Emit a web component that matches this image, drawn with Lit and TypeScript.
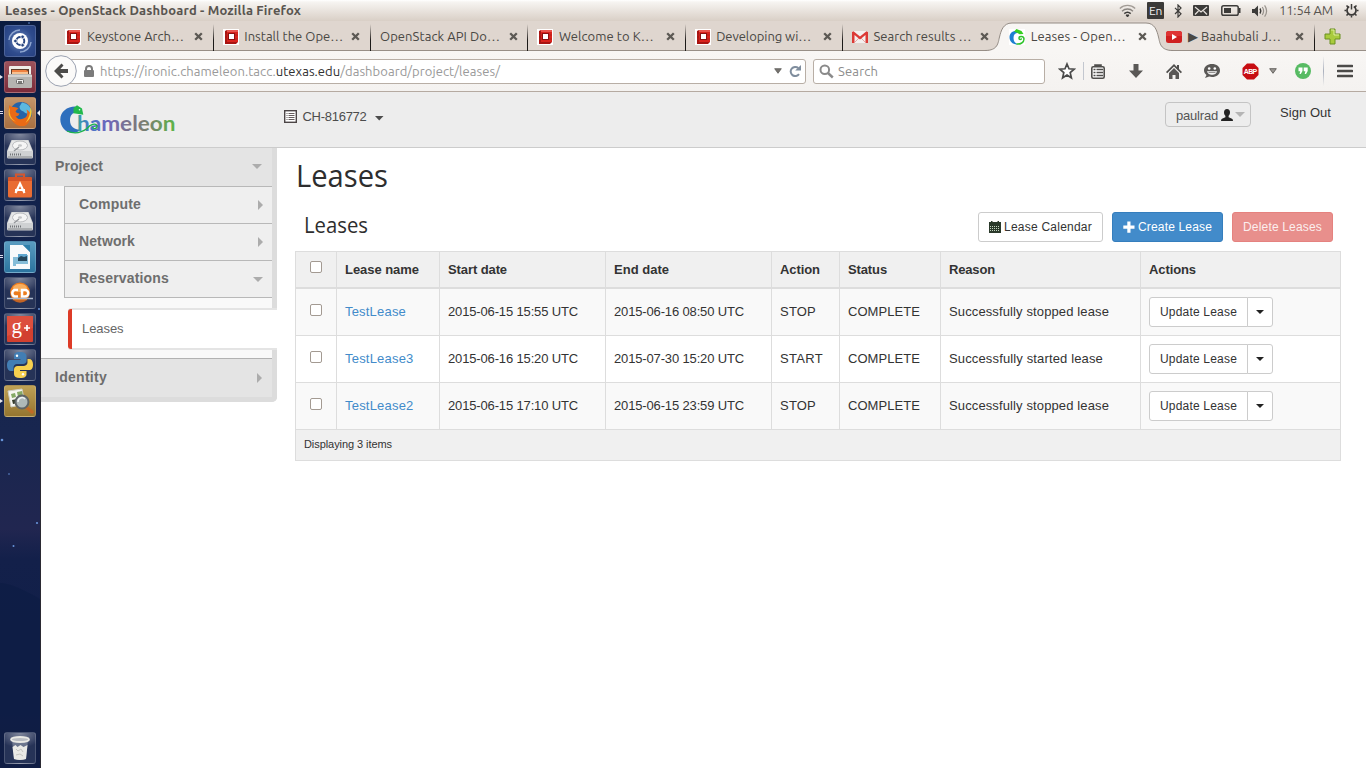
import { LitElement, html, css } from 'lit';
import { customElement, property } from 'lit/decorators.js';

/** Single line of text set to an exact measure by tracking, or by condensing. */
@customElement('ui-text')
class UiText extends LitElement {
  @property({ type: Number }) w = 0;
  @property({ type: Boolean }) condense = false;
  static styles = css`
    :host { display: inline-block; white-space: pre; flex: none; }
    span { display: inline-block; transform-origin: 0 50%; white-space: pre; }
  `;
  render() { return html`<span><slot></slot></span>`; }
  firstUpdated() {
    const span = this.renderRoot.querySelector('span') as HTMLElement;
    const natural = span.getBoundingClientRect().width;
    const count = (this.textContent || '').length;
    if (!this.w || !natural || !count) return;
    this.style.width = this.w + 'px';
    if (this.condense) span.style.transform = `scaleX(${this.w / natural})`;
    else span.style.letterSpacing = (this.w - natural) / count + 'px';
  }
}

const openstack = html`<svg width="16" height="16" viewBox="0 0 16 16"><rect width="16" height="16" fill="#fff"/><path d="M2 2l2-1h11v12l-2 2H2z" fill="#a81411"/><path d="M4 1h11v12H4z" fill="#d9221c"/><path d="M4 1h11v2H4z" fill="#e8564f"/><rect x="5" y="4" width="7" height="7" fill="#8d1010"/><rect x="6" y="5" width="5" height="5" fill="#fff"/><path d="M2 6h3M2 10h3M12 6h3M12 10h3" stroke="#b0221d" stroke-width="1"/></svg>`;
const gmail = html`<svg width="16" height="16" viewBox="0 0 16 16"><rect y="2" width="16" height="12" rx="1" fill="#f3f0ef"/><path d="M3 13l4-4M13 13L9 9" stroke="#e5a5a2" fill="none"/><path d="M0 3v11h2.500V6L8 10.500 13.500 6v8H16V3l-1.500-.8L8 7.600 1.500 2.200z" fill="#dc3a36"/></svg>`;
const chameleon = html`<svg width="16" height="16" viewBox="0 0 16 16"><rect width="16" height="16" fill="#fff"/><path d="M8.500 2.200C4 1 .5 4 .5 8.300S4 16 9 15.300c-3-1-4.500-3-4.500-6.300S6 4 9 4z" fill="#1d7fd0"/><path d="M5 2.500L7.500 0l5 2 2 3-4 .3L8.500 4z" fill="#35cf1e"/><path d="M7.500 15c4 .5 7.500-1.500 7.500-5 0-3-5-3.500-5-.8 0 1.800 2.600 1.600 2.300.2" fill="none" stroke="#30c32b" stroke-width="1.500"/></svg>`;
const youtube = html`<svg width="16" height="16" viewBox="0 0 16 16"><rect y="2" width="16" height="12" rx="2.500" fill="#cf2020"/><path d="M0 4.500Q0 2 2.500 2h11Q16 2 16 4.500V7H0z" fill="#df3434"/><path d="M6 5l5 3-5 3z" fill="#fff"/></svg>`;
const closeX = html`<svg class="x" width="9" height="9" viewBox="0 0 9 9"><path d="M1.200 1.200l6.600 6.600M7.800 1.200L1.200 7.800" stroke="#5c5954" stroke-width="2.300"/></svg>`;

const tabs = [
  { icon: openstack, text: 'Keystone Arch…', w: 97 },
  { icon: openstack, text: 'Install the Ope…', w: 99 },
  { icon: null, text: 'OpenStack API Do…', w: 120 },
  { icon: openstack, text: 'Welcome to K…', w: 95 },
  { icon: openstack, text: 'Developing wi…', w: 95 },
  { icon: gmail, text: 'Search results …', w: 98 },
  { icon: chameleon, text: 'Leases - Open…', w: 95, active: true },
  { icon: youtube, text: '▶ Baahubali J…', w: 93 },
];

@customElement('browser-tabs')
class BrowserTabs extends LitElement {
  static styles = css`
    :host { display: flex; height: 30px; background: #dfd6cf; box-sizing: border-box; padding-left: 15px; border-bottom: 1px solid #988f87;
      font: 13px/16px "Ubuntu", "Noto Sans", sans-serif; color: #4a4844; }
    .tab { width: 157.3px; flex: none; box-sizing: border-box; display: flex; align-items: center; padding: 2px 10.4px 0 9.4px; height: 29px; position: relative; }
    .tab > svg { flex: none; }
    .tab ui-text { margin: -1px 0 0 5.6px; }
    .tab ui-text.bare { margin-left: 0; }
    .x { margin-left: auto; }
    .tab::after { content: ""; position: absolute; right: -0.600px; top: 3px; width: 1px; height: 27px; background: linear-gradient(#dfd6cf00, #1c1a18 60%); }
    .tab.active::after, .tab.before::after { display: none; }
    .shape { position: absolute; left: -15px; top: 0; }
    .active > *:not(.shape) { position: relative; }
    .plus { margin: 7px 0 0 10px; }
  `;
  render() {
    return html`${tabs.map((t, i) => html`<div class="tab ${t.active ? 'active' : ''} ${tabs[i + 1]?.active ? 'before' : ''}">
      ${t.active ? html`<svg class="shape" width="188" height="30" viewBox="0 0 188 30"><path d="M0 29.500C13 29.500 13 22 14.500 16S18 2 27 2H161c9 0 11 8 12.500 14S175 29.500 188 29.500V31H0z" fill="#f8f6f4"/><path d="M0 29.500C13 29.500 13 22 14.500 16S18 2 27 2H161c9 0 11 8 12.500 14S175 29.500 188 29.500" fill="none" stroke="#938b84"/></svg>` : ''}
      ${t.icon ?? ''}<ui-text class=${t.icon ? '' : 'bare'} .w=${t.w}>${t.text}</ui-text>${closeX}</div>`)}
      <svg class="plus" width="17" height="17" viewBox="0 0 17 17"><path d="M6 1h5v5h5v5h-5v5H6v-5H1V6h5z" fill="#a9cb3d" stroke="#6b9023"/><path d="M7 2h3v5h5" fill="none" stroke="#dcec9a"/></svg>`;
  }
}

@customElement('nav-bar')
class NavBar extends LitElement {
  static styles = css`
    :host { display: grid; grid-template-columns: 765px 7px 232px 6px 32px 1px 28px 48px 28px 48px 28px 18px 41px 1px 42px; align-items: center; justify-items: center;
      height: 41px; box-sizing: border-box; background: linear-gradient(#f8f6f4, #f4f2f0); border-bottom: 1px solid #b5aaa1; font: 13px/18px "Ubuntu", "Noto Sans", sans-serif; color: #999; }
    .loc { display: flex; width: 765px; align-items: center; position: relative; }
    .back { flex: none; margin-left: 4px; position: relative; z-index: 1; }
    .url { box-sizing: border-box; width: 744px; height: 25px; margin-left: -15px; border: 1px solid #b8aea5; border-radius: 0 3px 3px 0; background: #fff; display: flex; align-items: center; padding: 0 4px 0 21px; }
    .url svg { flex: none; }
    .url ui-text { margin-left: 6px; }
    .dark { color: #2e2e2e; }
    .dd { margin-left: auto; margin-right: 7px; }
    .search { box-sizing: border-box; width: 232px; height: 25px; border: 1px solid #b8aea5; border-radius: 3px; background: #fff; display: flex; align-items: center; padding-left: 5px; }
    .search ui-text { margin-left: 4px; color: #8d8d8d; }
    .sep { width: 1px; height: 18px; background: #c3c7cf; }
    .tall { height: 30px; background: linear-gradient(#f7f5f300, #aab0bd, #f7f5f300); }
  `;
  render() {
    return html`
    <div class="loc">
      <svg class="back" width="32" height="32" viewBox="0 0 32 32"><circle cx="16" cy="16" r="15.300" fill="#fbfaf9" stroke="#9aa1b0"/><path d="M16.500 8.500l-7.500 7.500 7.500 7.500 2-2-3.200-3.500H23v-4h-7.700l3.200-3.500z" fill="#4c4b49"/></svg>
      <div class="url">
        <svg width="10" height="12" viewBox="0 0 10 12"><path d="M2 6V4a3 3 0 0 1 6 0v2" fill="none" stroke="#7b7b7b" stroke-width="2"/><rect y="5" width="10" height="7" rx="1" fill="#7b7b7b"/></svg>
        <ui-text .w=${400}>https://ironic.chameleon.tacc.<span class="dark">utexas.edu</span>/dashboard/project/leases/</ui-text>
        <svg class="dd" width="8" height="6" viewBox="0 0 8 6"><path d="M.7.700h6.600L4 5.300z" fill="#76736f" stroke="#5c5a57" stroke-width=".8"/></svg>
        <svg width="12" height="12" viewBox="0 0 12 12"><path d="M9.300 3A4.600 4.600 0 1 0 10 9.200" fill="none" stroke="#7f8d9d" stroke-width="2"/><path d="M12 0v5.600H6.200z" fill="#7f8d9d"/></svg>
      </div>
    </div><span></span>
    <div class="search"><svg width="15" height="15" viewBox="0 0 15 15"><circle cx="5.800" cy="5.800" r="4.300" fill="none" stroke="#8a8a8a" stroke-width="2"/><path d="M9 9l4.800 4.500" stroke="#8a8a8a" stroke-width="2.400"/></svg><ui-text .w=${40}>Search</ui-text></div>
    <span></span>
    <svg width="18" height="18" viewBox="0 0 18 18"><path d="M9 2l2 4.800 5.200.4-4 3.400 1.200 5.200L9 13l-4.400 2.800 1.200-5.200-4-3.400 5.200-.4z" fill="#fff" stroke="#4a4a4a" stroke-width="1.700"/></svg>
    <span class="sep"></span>
    <svg width="14" height="15" viewBox="0 0 14 15"><path d="M4 3V1h6v2" fill="#4f4e4c" stroke="#4f4e4c" stroke-width="1.600"/><rect x=".8" y="2.800" width="12.400" height="11.400" rx="1.500" fill="#fff" stroke="#4f4e4c" stroke-width="1.600"/><path d="M2.500 5.500h2M2.500 8.500h2M2.500 11.500h2M5.500 5.500H12M5.500 8.500H12M5.500 11.500H12" stroke="#4f4e4c" stroke-width="1.400"/></svg>
    <svg width="14" height="14" viewBox="0 0 14 14"><path d="M4.500 0h5v6.500H14L7 14 0 6.500h4.500z" fill="#5a5856"/></svg>
    <svg width="16" height="15" viewBox="0 0 16 15"><path d="M8 0l3 3V1h2v4l3 3-1.200 1.200L8 2.600 1.200 9.200 0 8z" fill="#4f4e4c"/><path d="M3 9l5-5 5 5v6h-3.500v-4h-3v4H3z" fill="#5a5856"/></svg>
    <svg width="16" height="16" viewBox="0 0 16 16"><path d="M8 1c4.500 0 8 2.600 8 6.500S12.500 14 8 14c-1 0-2-.1-2.800-.4L1 15l1.500-3C1 10.800 0 9.300 0 7.500 0 3.600 3.500 1 8 1z" fill="#5a5856"/><circle cx="5.200" cy="5.500" r="1.300" fill="#fff"/><circle cx="10.800" cy="5.500" r="1.300" fill="#fff"/><path d="M3 8.300h10c-.5 2.400-2.500 3.500-5 3.500s-4.500-1.100-5-3.500z" fill="#fff"/><path d="M4.500 9.600h7" stroke="#5a5856" stroke-width=".7"/></svg>
    <svg width="17" height="17" viewBox="0 0 17 17"><path d="M5 .5h7L16.500 5v7L12 16.500H5L.5 12V5z" fill="#c70d12"/><text x="1.800" y="11.200" textLength="13.400" lengthAdjust="spacing" font-family="Liberation Sans" font-size="7" font-weight="bold" fill="#fff">ABP</text></svg>
    <svg width="8" height="6" viewBox="0 0 8 6"><path d="M.7.700h6.600L4 5.300z" fill="#9a9793" stroke="#5c5a57" stroke-width=".9"/></svg>
    <svg width="16" height="16" viewBox="0 0 16 16"><circle cx="8" cy="8" r="8" fill="#57bb63"/><path d="M3.500 4.500h4v3.500L5.800 11H4.500L5.200 8.300H3.500zM8.700 4.500h4v3.500L11 11H9.700l.7-2.700H8.700z" fill="#fff"/></svg>
    <span class="sep tall"></span>
    <svg width="16" height="14" viewBox="0 0 16 14"><path d="M1 2h14M1 7h14M1 12h14" stroke="#4b4a48" stroke-width="2.700" stroke-linecap="round"/></svg>`;
  }
}

@customElement('side-launcher')
class SideLauncher extends LitElement {
  static styles = css`
    :host { display: flex; flex-direction: column; width: 41px; box-sizing: border-box; border-right: 1px solid #2b2a33; padding: 4px 0 4px 4px; gap: 4px; position: relative;
      background: linear-gradient(#0a1b40, #12224c 25%, #18264f 55%, #212650 68%, #13204a 72%, #101f48 90%, #1b2140); }
    .tile { box-sizing: border-box; width: 32px; height: 32px; border-radius: 3px; border: 1px solid #ffffff2a; display: flex; align-items: center; justify-content: center; position: relative; z-index: 1;
      background: radial-gradient(ellipse 75% 50% at 50% 0, #ffffff70, #ffffff08), #1f2c52; }
    .tile svg { display: block; flex: none; }
    .blue { background: radial-gradient(#6f8bbf, #2f4c8d 60%, #264080); }
    .red { background: linear-gradient(#9c525b, #7b2b3a); }
    .tan { background: linear-gradient(#c39469, #a86f41); }
    .teal { background: linear-gradient(#5a9cc0, #2b749f); }
    .gold { background: linear-gradient(#bea055, #947530); }
    .end { margin-top: auto; }
    .pip::before { content: ""; position: absolute; left: -5px; top: 13px; border: 2.5px solid transparent; border-left: 3px solid #e8e8ee; }
    .two::before { content: ""; position: absolute; left: -5px; top: 13px; width: 3px; height: 1px; border-top: 1px solid #dde; border-bottom: 1px solid #dde; }
    .focus::after { content: ""; position: absolute; right: -5px; top: 12px; border: 3px solid transparent; border-right: 3px solid #f0f0f4; }
    .sky { position: absolute; left: 0; top: 0; }
  `;
  render() {
    const disk = html`<svg width="26" height="20" viewBox="0 0 26 20"><path d="M4.500 1h17L26 12v6q0 1.500-1.500 1.500h-23Q0 19.500 0 18v-6z" fill="#cfd1d3"/><path d="M5 1.500h16l4 10.500H1z" fill="#e6e7e8"/><ellipse cx="13" cy="6.500" rx="7.500" ry="4.500" fill="#f5f5f5" stroke="#b9bbbe"/><ellipse cx="13" cy="6.500" rx="2" ry="1.200" fill="#c2c4c6"/><path d="M7 12l5-4" stroke="#94979b" stroke-width="1.500"/><path d="M1 18h24" stroke="#85888c"/><path d="M3 15.500h12" stroke="#73767a" stroke-width="2" stroke-dasharray="1 1"/></svg>`;
    return html`
    <svg class="sky" width="40" height="747" viewBox="0 0 40 747"><path d="M0 562q12 0 40 16v169H0z" fill="#0e1d45" opacity=".8"/><g fill="#6793d8"><circle cx="2" cy="419" r="1.300"/><circle cx="9" cy="453" r=".8"/><circle cx="37" cy="502" r="1.100"/><circle cx="13.500" cy="525" r="1"/><circle cx="39" cy="288" r="1"/><circle cx="29" cy="2" r=".8"/></g></svg>
    <div class="tile blue"><svg width="26" height="26" viewBox="0 0 26 26"><path d="M2 12a11 11 0 0 1 11-10M24 14a11 11 0 0 1-11 10" fill="none" stroke="#8fa6d0" stroke-width="1.500"/><circle cx="13" cy="13" r="8" fill="#fff"/><circle cx="13.300" cy="13" r="4" fill="none" stroke="#27447f" stroke-width="1.900"/><g fill="#27447f" stroke="#fff" stroke-width=".8"><circle cx="8.400" cy="13" r="1.800"/><circle cx="15.600" cy="8.800" r="1.800"/><circle cx="15.600" cy="17.200" r="1.800"/></g></svg></div>
    <div class="tile red pip"><svg width="24" height="24" viewBox="0 0 24 24"><path d="M1 2q0-1 1-1h20q1 0 1 1v9H1z" fill="#efede9"/><path d="M3 4h18v6H3z" fill="#5e3c2a"/><path d="M4 5h14l2 1v4H4z" fill="#ee8040"/><path d="M4 7h16v3H4z" fill="#f7c08f"/><rect y="9" width="24" height="14" rx="1.500" fill="#b5b4b1"/><path d="M0 10h24v2H0z" fill="#d2d1cf"/><rect x="8.500" y="14.500" width="7" height="4" rx="1" fill="#f0f0f0" stroke="#6b6b69"/><path d="M10 17h4" stroke="#55534f" stroke-width="1.500"/></svg></div>
    <div class="tile tan two focus"><svg width="25" height="25" viewBox="0 0 25 25"><circle cx="13" cy="12" r="11" fill="#2763a8"/><path d="M14 1.500q8 1 9.500 9-5 4-8 0-4-1-4-5z" fill="#5cb8df"/><path d="M1.500 4q1 2 3 2 4-.5 6 1.500-2 1-3 3 1 2 4 2-1 3-4 3 4 5 10 1 3-3 1-8 5 3 4 8-2 9-9 9C3 23.500-1 12 1.500 4z" fill="#ea6a16"/><path d="M2 6q-2 10 6 15Q0 18 .6 10z" fill="#f6b730"/><path d="M22.500 6q4 9-5 16 4-6 4.500-11z" fill="#f9c932"/></svg></div>
    <div class="tile">${disk}</div>
    <div class="tile"><svg width="24" height="25" viewBox="0 0 24 25"><path d="M8 5V1.500h8V5" fill="none" stroke="#d4562e" stroke-width="2"/><rect y="4" width="24" height="20.500" rx="1.500" fill="#e96c33"/><path d="M0 5.500Q0 4 1.500 4h21Q24 4 24 5.500V8H0z" fill="#d25328"/><path d="M7.500 20L12 10.500l4.500 9.500M7 17h10" fill="none" stroke="#fff" stroke-width="2.200"/></svg></div>
    <div class="tile">${disk}</div>
    <div class="tile teal two"><svg width="22" height="26" viewBox="0 0 22 26"><path d="M1 1h13l7 7v17H1z" fill="#f8fafb"/><path d="M14 1h7v7z" fill="#2d7faa"/><path d="M4 13h12v-2h3v9H7v2H4z" fill="#85bdd8"/><path d="M9 10h9v7H9z" fill="#5ea7d0"/><path d="M9 14l3-2 3 1 3-1v5H9z" fill="#24465b"/></svg></div>
    <div class="tile"><svg width="26" height="23" viewBox="0 0 26 23"><circle cx="13" cy="10.500" r="10" fill="#ed7d1e"/><ellipse cx="13" cy="6" rx="7" ry="4" fill="#f8ae5d"/><path d="M11 8H7.500a3.500 3.500 0 0 0 0 6.500H11M15 8h3a3 3 0 0 1 0 6.500h-3z" fill="none" stroke="#fff" stroke-width="2.500"/><path d="M0 16.500h26" stroke="#aab7cb" stroke-width="1.500"/><path d="M5 18h16q-8 5-16 0z" fill="#a6532a" opacity=".6"/></svg></div>
    <div class="tile"><svg width="26" height="26" viewBox="0 0 26 26"><rect width="26" height="26" rx="1" fill="#d2402f"/><path d="M0 0h26v12L0 20z" fill="#df5544" opacity=".7"/><text x="4.500" y="17" font-family="Liberation Serif" font-size="21" fill="#fff">g</text><path d="M20 9v6M17 12h6" stroke="#fff" stroke-width="1.700"/></svg></div>
    <div class="tile"><svg width="26" height="26" viewBox="0 0 26 26"><path d="M13 0c-5 0-6 2-6 4v3h6.500v1H4C1 8 0 10 0 13.500S1.500 19 4 19h2.500v-3.500c0-2 1.500-3.500 3.500-3.500h6c2 0 3.500-1.500 3.500-3.500V4c0-2.500-2.500-4-6.500-4z" fill="#427eb4"/><circle cx="10" cy="3.800" r="1.200" fill="#fff"/><path d="M13 26c5 0 6.500-1.500 6.500-4v-3H13v-1h9c3 0 4-2 4-5.500S24.500 7 22 7h-1.500v3.500c0 2-2 3.500-4 3.500h-6c-2 0-3.500 1.500-3.500 3.500V22c0 2.500 2 4 6 4z" fill="#f6d04f"/><circle cx="16" cy="22.300" r="1.200" fill="#fff"/></svg></div>
    <div class="tile gold pip"><svg width="28" height="28" viewBox="0 0 28 28"><path d="M2 4l14-2 3 15-14 3z" fill="#f6f6f0" stroke="#cfcfc3"/><path d="M5 7l4-1 1 4-4 1zM11 5l5-1 1 5-5 1z" fill="#85a965"/><path d="M6 13l5-1 1 4-5 1z" fill="#353c2c"/><path d="M20 20l6 5" stroke="#c06a26" stroke-width="3.500" stroke-linecap="round"/><circle cx="16" cy="15" r="6.500" fill="#aeb8b8" stroke="#5e6466" stroke-width="2"/><path d="M12 15a4 4 0 0 1 7-3" fill="none" stroke="#eef3f3" stroke-width="1.500"/></svg></div>
    <div class="tile end"><svg width="20" height="25" viewBox="0 0 20 25"><path d="M2 4h16l-2 19q-6 2-12 0z" fill="#8e96a8" opacity=".6"/><path d="M2.500 11l3-2 2 2 3-2 3 2 4-2-1.500 14q-6 2-12 0z" fill="#e9e9e6"/><path d="M6 13l2 2 3-2 2 3M6 19l4-1 3 2" stroke="#c4c4c0" fill="none"/><ellipse cx="10" cy="3.500" rx="9" ry="2.500" fill="#b9bcc2" stroke="#e8e8e4" stroke-width="1.800"/></svg></div>`;
  }
}

@customElement('title-bar')
class TitleBar extends LitElement {
  static styles = css`
    :host { display: flex; height: 21px; align-items: center; box-sizing: border-box; padding: 0 7px 0 5px; background: linear-gradient(#fff 0, #f6f4f1 10%, #d9cfc6); color: #595550;
      font: bold 13px/18px "Ubuntu", "Noto Sans", sans-serif; }
    ui-text { margin-bottom: 2px; }
    .tray { margin-left: auto; display: flex; align-items: center; }
    .time { font-weight: normal; font-size: 13px; margin: 0 11px 2px 11px; }
    .en { width: 17px; height: 17px; background: #3b3a38; color: #eee; font: 12px/18px "Ubuntu", "Noto Sans", sans-serif; text-align: center; border-radius: 1px; margin: 0 10px 0 11px; letter-spacing: -.4px; }
    .bt { margin-right: 11px; } .mail { margin-right: 12px; } .bat { margin-right: 11px; }
  `;
  render() {
    return html`<ui-text .w=${296}>Leases - OpenStack Dashboard - Mozilla Firefox</ui-text>
    <div class="tray">
      <svg width="17" height="13" viewBox="0 0 17 13"><g fill="none" stroke-width="1.300"><path d="M.8 4.500a11 11 0 0 1 15.400 0" stroke="#a29c96"/><path d="M3 7.200a8 8 0 0 1 11 0" stroke="#8a8580"/><path d="M5.300 9.600a5 5 0 0 1 6.400 0" stroke="#3c3b39" stroke-width="1.600"/></g><path d="M7 11h3l-1.500 2z" fill="#3c3b39" stroke="#3c3b39"/></svg>
      <span class="en">En</span>
      <svg class="bt" width="8" height="14" viewBox="0 0 8 14"><path d="M1 3.800l6 6L4 13V1l3 3-6 6" fill="none" stroke="#3c3b39" stroke-width="1.200"/></svg>
      <svg class="mail" width="16" height="11" viewBox="0 0 16 11"><rect width="16" height="11" rx="1" fill="#3c3b39"/><path d="M2 2l6 5 6-5M2 9.500l3.500-3.500M14 9.500L10.500 6" fill="none" stroke="#e8e3de" stroke-width="1.200"/></svg>
      <svg class="bat" width="20" height="11" viewBox="0 0 20 11"><rect x=".8" y=".8" width="16.400" height="9.400" rx="1.800" fill="none" stroke="#3c3b39" stroke-width="1.500"/><rect x="3" y="3" width="7" height="5" fill="#3c3b39"/><path d="M18.700 3v5" stroke="#3c3b39" stroke-width="1.600"/></svg>
      <svg width="16" height="14" viewBox="0 0 16 14"><path d="M0 5h2.500L6 1.500v11L2.500 9H0z" fill="#3c3b39"/><path d="M8 4.500q1.600 2.500 0 5" fill="none" stroke="#3c3b39" stroke-width="1.400"/><path d="M10.300 3q2.600 4 0 8M12.600 1.300q4 5.700 0 11.400" fill="none" stroke="#98928c" stroke-width="1.200"/></svg>
      <ui-text class="time" .w=${54}>11:54 AM</ui-text>
      <svg width="15" height="15" viewBox="0 0 15 15"><path d="M5.200 3.600a4.500 4.500 0 1 0 4.600 0" fill="none" stroke="#3c3b39" stroke-width="1.700"/><path d="M7.500 1v5.500" stroke="#3c3b39" stroke-width="1.500"/><g stroke="#3c3b39" stroke-width="1.500"><path d="M2.500 2.500l1.400 1.400M12.500 2.500l-1.400 1.400M.5 7.500h2M12.500 7.500h2M2.500 12.500l1.400-1.400M12.500 12.500l-1.400-1.400M7.500 12.500v2"/></g></svg>
    </div>`;
  }
}

@customElement('dash-header')
class DashHeader extends LitElement {
  static styles = css`
    :host { display: flex; height: 56px; box-sizing: border-box; background: #ededed; border-bottom: 1px solid #ccc; font: 13px/18px "Liberation Sans", sans-serif; color: #333; padding-right: 35px; align-items: flex-start; }
    .logo { margin: 12px 0 0 18px; }
    .project { display: flex; align-items: center; margin: 16px 0 0 106.500px; color: #4c4c4c; }
    .project > svg:first-child { margin-bottom: 2px; }
    .project ui-text { margin: 0 8px 0 6px; }
    .project .caret { margin-top: 2px; }
    .user { margin: 10px 0 0 auto; box-sizing: border-box; width: 86px; height: 25px; border: 1px solid #c4c4c4; border-radius: 4px; display: flex; align-items: center; padding: 2px 0 0 10px; color: #555; }
    .user ui-text { margin-right: 3px; }
    .user svg { margin-bottom: 2px; }
    .out { margin: 12px 0 0 29px; }
  `;
  render() {
    return html`
      <svg class="logo" width="118" height="32" viewBox="0 0 118 32">
        <defs><linearGradient id="g" x1="0" x2="1"><stop offset="0" stop-color="#3aa6a0"/><stop offset=".12" stop-color="#4478c8"/><stop offset=".3" stop-color="#6c66bd"/><stop offset=".55" stop-color="#7d7486"/><stop offset=".75" stop-color="#77866a"/><stop offset="1" stop-color="#5cb648"/></linearGradient></defs>
        <path d="M16.500 2.600C8 2.500 1.300 8 1.300 15.500S7 29.500 14.500 28.800c3-.3 5.500-1.500 7.500-3.300-6 .5-11-2.500-11-9C11 11 13.500 8.500 18 8.500z" fill="#2e6fbd"/>
        <path d="M14.500 4L18 1.200l5 3.300 1.300 6.300-9.800-1.600z" fill="#22b94b"/><circle cx="20.500" cy="5.800" r=".8" fill="#e8fff0"/>
        <text x="18" y="26.500" textLength="98.500" lengthAdjust="spacingAndGlyphs" font-family="Lato" font-weight="bold" font-size="21.500" fill="url(#g)">hameleon</text>
        <path d="M8 27c7 3 14 2 20-2.500 3-4 9-6 10-2.500.5 3-4.500 3.500-4 .8" fill="none" stroke="#1ab24c" stroke-width="1.300"/>
      </svg>
      <div class="project"><svg width="13" height="13" viewBox="0 0 13 13"><rect x=".7" y=".7" width="11.600" height="11.600" fill="#fff" stroke="#4c4546" stroke-width="1.400"/><path d="M2.500 3.500h1M2.500 5.500h1M2.500 7.500h1M2.500 9.500h1M4.500 3.500h6M4.500 5.500h6M4.500 7.500h6M4.500 9.500h6" stroke="#655c5d"/></svg><ui-text .w=${64}>CH-816772</ui-text><svg class="caret" width="9" height="5" viewBox="0 0 9 5"><path d="M0 0h8.500L4.200 4.500z" fill="#4c4c4c"/></svg></div>
      <div class="user"><ui-text .w=${42}>paulrad</ui-text><svg width="12" height="12" viewBox="0 0 12 12"><path d="M6 0c2 0 3 1.300 3 3.200C9 5 8.300 6 7.600 6.800v1.400L11 9.700q1 .5 1 2.300H0q0-1.800 1-2.300l3.400-1.500V6.800C3.700 6 3 5 3 3.200 3 1.300 4 0 6 0z" fill="#222"/></svg><svg width="13" height="5" viewBox="0 0 13 5"><path d="M2 0h10L7 5z" fill="#b5b5b5"/></svg></div>
      <ui-text class="out" .w=${51}>Sign Out</ui-text>`;
  }
}

@customElement('side-nav')
class SideNav extends LitElement {
  static styles = css`
    :host { display: block; width: 236px; height: 254px; box-sizing: border-box; background: #f9f9f9; flex: none; font: bold 14px/18px "Liberation Sans", sans-serif; color: #6e6e6e;
      border-right: 5px solid #dcdcdc; border-bottom: 5px solid #dcdcdc; border-bottom-right-radius: 5px; }
    .row { display: flex; justify-content: space-between; box-sizing: border-box; align-items: center; }
    .top { background: #e4e4e4; height: 38px; padding: 0 10px 2px 14px; }
    .id { height: 39px; border-top: 1px solid #b2b2b2; margin-top: 8px; padding-bottom: 2px; }
    .id svg { margin-top: 2px; }
    .group { margin-left: 23px; border: solid #b8b8b8; border-width: 0 0 1px 1px; }
    .sub { height: 37px; border-top: 1px solid #b8b8b8; background: #efefef; padding: 0 9px 2px 14px; }
    .sub svg { margin-top: 2px; }
    .leaf { margin: 10px -5px 0 27px; height: 42px; box-sizing: border-box; border: solid #e4e4e4; border-width: 2px 0; background: #fff; display: flex; align-items: center; font-size: 13px; font-weight: normal; color: #666; border-radius: 3px 0 0 3px; position: relative; }
    .bar { width: 4px; height: 40px; border-radius: 3px 0 0 3px; background: #dd3b27; margin: -1px 10px -1px 0; }
    .first svg { margin-top: 1px; }
  `;
  render() {
    const down = html`<svg width="10" height="5" viewBox="0 0 10 5"><path d="M0 0h10L5 5z" fill="#acacac"/></svg>`;
    const right = html`<svg width="5" height="10" viewBox="0 0 5 10"><path d="M0 0v10l5-5z" fill="#acacac"/></svg>`;
    return html`
      <div class="row top first"><ui-text .w=${48}>Project</ui-text>${down}</div>
      <div class="group">
        <div class="row sub"><ui-text .w=${62}>Compute</ui-text>${right}</div>
        <div class="row sub"><ui-text .w=${56}>Network</ui-text>${right}</div>
        <div class="row sub"><ui-text .w=${90}>Reservations</ui-text>${down}</div>
      </div>
      <div class="leaf"><span class="bar"></span><ui-text .w=${41.5}>Leases</ui-text></div>
      <div class="row top id"><ui-text .w=${52}>Identity</ui-text>${right}</div>`;
  }
}

const leases = [
  ['TestLease', 61, '2015-06-15 15:55 UTC', '2015-06-16 08:50 UTC', 'STOP', 36, 'COMPLETE', 'Successfully stopped lease', 160],
  ['TestLease3', 68.5, '2015-06-16 15:20 UTC', '2015-07-30 15:20 UTC', 'START', 43, 'COMPLETE', 'Successfully started lease', 154],
  ['TestLease2', 68.5, '2015-06-15 17:10 UTC', '2015-06-15 23:59 UTC', 'STOP', 36, 'COMPLETE', 'Successfully stopped lease', 160],
] as any[];

@customElement('lease-panel')
class LeasePanel extends LitElement {
  static styles = css`
    :host { display: block; flex: 1; padding: 8px 25px 0 18px; font: 13px/18px "Liberation Sans", sans-serif; color: #333; box-sizing: border-box; }
    h1, h2 { margin: 0; font-family: "Ubuntu Condensed", "Open Sans", sans-serif; font-weight: normal; color: #2e2e2e; }
    h1 { font-size: 31px; line-height: 38px; height: 40px; padding-left: 1px; }
    .bar { display: flex; height: 30px; margin: 16px 8px 9px 9px; gap: 9px; }
    h2 { font-size: 22px; line-height: 24px; margin-right: auto; }
    .btn { box-sizing: border-box; height: 30px; display: flex; align-items: center; border: 1px solid #ccc; border-radius: 3px; background: #fff; padding: 0 10px; font-size: 12px; gap: 3px; color: #333; }
    .create { background: #428bca; border-color: #357ebd; color: #fff; }
    .delete { background: #e88f8c; border-color: #e5827f; color: #fbeeee; }
    .grid { display: grid; grid-template-columns: 41px 103px 166px 166px 68px 101px 200px 200px; border-right: 1px solid #ddd; }
    .c { box-sizing: border-box; border: solid #ddd; border-width: 0 0 1px 1px; padding-left: 8px; display: flex; align-items: center; height: 47px; background: #fff; }
    .odd { background: #f9f9f9; }
    .h { height: 38px; border-width: 1px 0 2px 1px; background: #f0f0f0; font-weight: bold; }
    .foot { grid-column: 1 / -1; height: 31px; font-size: 11px; background: #f0f0f0; padding-bottom: 3px; }
    .box { width: 12px; height: 12px; box-sizing: border-box; border: 1px solid #a39a92; border-radius: 2px; background: #fff; margin: 0 0 4px 6px; }
    .h .box { margin-bottom: 6px; }
    .link { color: #428bca; }
    .split .btn:first-child { border-radius: 3px 0 0 3px; }
    .split { display: flex; }
    .split .btn + .btn { border-radius: 0 3px 3px 0; margin-left: -1px; width: 26px; padding: 0 8px; }
  `;
  render() {
    const heads: [string, number][] = [['Lease name', 74], ['Start date', 59], ['End date', 55], ['Action', 40], ['Status', 39], ['Reason', 46], ['Actions', 47]];
    return html`
      <h1><ui-text condense .w=${92}>Leases</ui-text></h1>
      <div class="bar"><h2><ui-text condense .w=${64}>Leases</ui-text></h2>
        <div class="btn"><svg width="12" height="12" viewBox="0 0 12 12"><path d="M0 1h2V0h1.500v1h5V0H10v1h2v11H0z" fill="#2b3a2b"/><path d="M1 5.500h10M1 7.500h10M1 9.500h10" stroke="#c3d4bf" stroke-dasharray="1 1"/></svg><ui-text .w=${88}>Lease Calendar</ui-text></div>
        <div class="btn create"><svg width="12" height="12" viewBox="0 0 12 12"><path d="M4.300.500h3.200v4h4v3.200h-4v4H4.300v-4h-4V4.500h4z" fill="#fff"/></svg><ui-text .w=${74}>Create Lease</ui-text></div>
        <div class="btn delete"><ui-text .w=${79}>Delete Leases</ui-text></div>
      </div>
      <div class="grid">
        <div class="c h"><span class="box"></span></div>
        ${heads.map(([t, w]) => html`<div class="c h"><ui-text .w=${w}>${t}</ui-text></div>`)}
        ${leases.map((r, i) => {
          const k = i % 2 ? 'c' : 'c odd';
          return html`<div class=${k}><span class="box"></span></div>
          <div class=${k}><ui-text class="link" .w=${r[1]}>${r[0]}</ui-text></div>
          <div class=${k}><ui-text .w=${130}>${r[2]}</ui-text></div>
          <div class=${k}><ui-text .w=${130}>${r[3]}</ui-text></div>
          <div class=${k}><ui-text .w=${r[5]}>${r[4]}</ui-text></div>
          <div class=${k}><ui-text .w=${72}>${r[6]}</ui-text></div>
          <div class=${k}><ui-text .w=${r[8]}>${r[7]}</ui-text></div>
          <div class=${k}><div class="split"><div class="btn"><ui-text .w=${77}>Update Lease</ui-text></div><div class="btn"><svg width="8" height="4" viewBox="0 0 8 4"><path d="M0 0h8L4 4z" fill="#222"/></svg></div></div></div>`;
        })}
        <div class="c foot"><ui-text .w=${88}>Displaying 3 items</ui-text></div>
      </div>`;
  }
}

@customElement('app-root')
class AppRoot extends LitElement {
  static styles = css`
    :host { display: flex; flex-direction: column; width: 1366px; height: 768px; overflow: hidden; background: #fff; }
    .desk { display: flex; flex: 1; min-height: 0; }
    .win { flex: 1; min-width: 0; display: flex; flex-direction: column; }
    .page { display: flex; align-items: flex-start; }
  `;
  render() {
    return html`<title-bar></title-bar>
      <div class="desk"><side-launcher></side-launcher>
        <div class="win"><browser-tabs></browser-tabs><nav-bar></nav-bar><dash-header></dash-header>
          <div class="page"><side-nav></side-nav><lease-panel></lease-panel></div>
        </div>
      </div>`;
  }
}
